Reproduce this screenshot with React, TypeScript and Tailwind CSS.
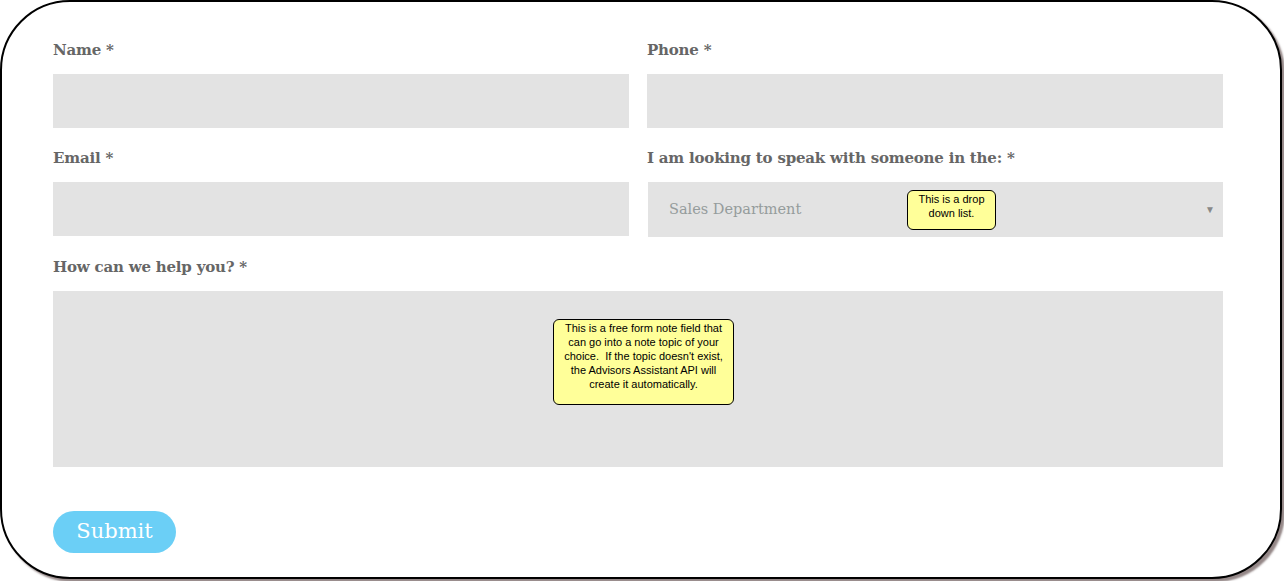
import React from 'react';

const labelClass =
  'block text-[15px] leading-[25px] tracking-[-0.2px] font-bold text-[#666666] font-["DejaVu_Serif",serif]';

function Field({ label, children }: { label: string; children: React.ReactNode }) {
  return (
    <div>
      <label className={labelClass}>{label} *</label>
      <div className="mt-[11px]">{children}</div>
    </div>
  );
}

function Note({ children, className }: { children: React.ReactNode; className: string }) {
  return (
    <div
      className={`absolute rounded-[6px] border-[1.5px] border-black bg-[#ffff99] text-center text-[11px] leading-[14px] text-black font-["Liberation_Sans",Arial,sans-serif] ${className}`}
    >
      {children}
    </div>
  );
}

export default function App() {
  return (
    <div className="w-[1284px] h-[581px] bg-white">
      <div className="w-[1282px] h-[579px] rounded-[70px] border-2 border-black bg-white shadow-[3px_3px_2px_rgba(90,70,70,0.65)] pl-[51px] pt-[36px]">
        <div className="w-[1170px]">
          <div className="grid grid-cols-2 gap-x-[18px] gap-y-[18px]">
            <Field label="Name">
              <input className="block w-full h-[54px] bg-[#e3e3e3] outline-none" />
            </Field>
            <Field label="Phone">
              <input className="block w-full h-[54px] bg-[#e3e3e3] outline-none" />
            </Field>
            <Field label="Email">
              <input className="block w-full h-[54px] bg-[#e3e3e3] outline-none" />
            </Field>
            <Field label="I am looking to speak with someone in the:">
              <div className="relative ml-px h-[55px] bg-[#e3e3e3] flex items-center pl-[21px] pr-[8px]">
                <span className='flex-1 text-[14.5px] text-[#959c9c] font-["DejaVu_Serif",serif]'>
                  Sales Department
                </span>
                <span className="text-[10px] text-[#888888]">▼</span>
                <Note className="left-[259px] top-[8px] w-[89px] h-[40px] pt-px px-1">
                  This is a drop down list.
                </Note>
              </div>
            </Field>
          </div>
          <div className="mt-[18px]">
            <Field label="How can we help you?">
              <div className="relative h-[176px] bg-[#e3e3e3]">
                <Note className="left-[500px] top-[28px] w-[181px] h-[86px] pt-px px-[8px]">
                  This is a free form note field that can go into a note topic of your choice.&nbsp; If the topic doesn't exist,
                  the Advisors Assistant API will create it automatically.
                </Note>
              </div>
            </Field>
          </div>
          <button className='mt-[44px] w-[123px] h-[42px] rounded-full bg-[#6bcff6] text-white text-[21px] font-["DejaVu_Serif",serif]'>
            Submit
          </button>
        </div>
      </div>
    </div>
  );
}
